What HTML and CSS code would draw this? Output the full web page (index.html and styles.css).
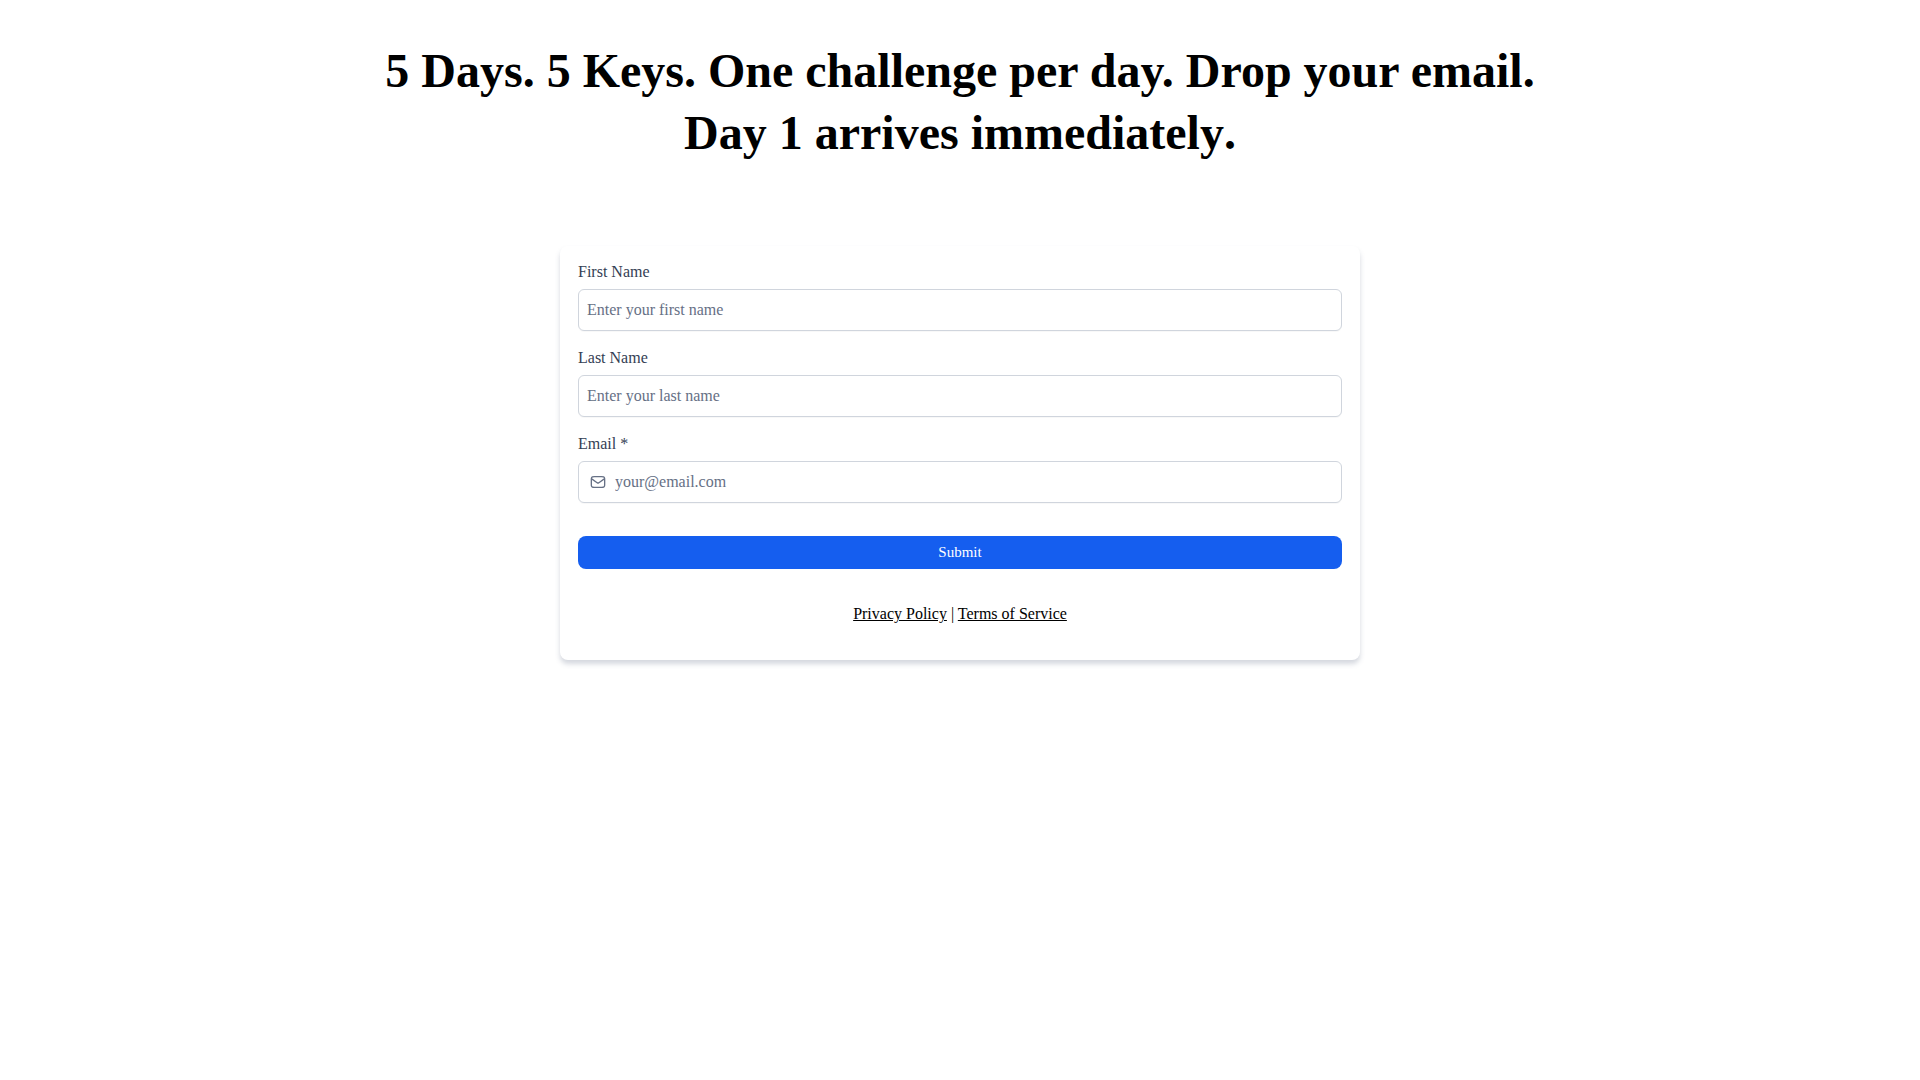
FILE: index.html
```html
<!DOCTYPE html>
<html lang="en">
<head>
    <meta charset="UTF-8">
    <meta name="viewport" content="width=device-width, initial-scale=1.0">
    <title>5 Days. 5 Keys.</title>
    <link rel="stylesheet" href="styles.css">
</head>
<body>
    <main class="page">
        <h1 class="headline">5 Days. 5 Keys. One challenge per day. Drop your email. <span class="lead">Day 1 arrives immediately</span>.</h1>

        <form class="form-card">
            <div class="field">
                <label for="firstName">First Name</label>
                <input type="text" id="firstName" name="first_name" placeholder="Enter your first name">
            </div>
            <div class="field">
                <label for="lastName">Last Name</label>
                <input type="text" id="lastName" name="last_name" placeholder="Enter your last name">
            </div>
            <div class="field">
                <label for="email">Email *</label>
                <div class="input-icon">
                    <svg width="16" height="16" viewBox="0 0 24 24" fill="none" stroke="currentColor" stroke-width="2" stroke-linecap="round" stroke-linejoin="round" aria-hidden="true">
                        <path d="M2 7l8.165 5.715c.661.463.992.695 1.351.784a2 2 0 0 0 .968 0c.36-.09.69-.32 1.351-.784L22 7M6.8 20h10.4c1.68 0 2.52 0 3.162-.327a3 3 0 0 0 1.311-1.311C22 17.72 22 16.88 22 15.2V8.8c0-1.68 0-2.52-.327-3.162a3 3 0 0 0-1.311-1.311C19.72 4 18.88 4 17.2 4H6.8c-1.68 0-2.52 0-3.162.327a3 3 0 0 0-1.311 1.311C2 6.28 2 7.12 2 8.8v6.4c0 1.68 0 2.52.327 3.162a3 3 0 0 0 1.311 1.311C4.28 20 5.12 20 6.8 20z"/>
                    </svg>
                    <input type="email" id="email" name="email" placeholder="your@email.com" required>
                </div>
            </div>
            <button type="submit" class="submit-btn">Submit</button>
            <p class="legal"><a href="#">Privacy Policy</a> | <a href="#">Terms of Service</a></p>
        </form>
    </main>
</body>
</html>
```
FILE: styles.css
```css
* {
    box-sizing: border-box;
}
body {
    margin: 0;
    background-color: #fff;
    color: #000;
    font-family: "Liberation Serif", "Times New Roman", serif;
    font-size: 16px;
    line-height: 24px;
}
.page {
    max-width: 1170px;
    margin: 0 auto;
    padding: 40px 5px;
}
.headline {
    margin: 0 0 82px;
    font-size: 48px;
    line-height: 62px;
    font-weight: 600;
    text-align: center;
}
.headline .lead {
    font-weight: 700;
}
.form-card {
    max-width: 800px;
    margin: 0 auto;
    padding: 14px 18px 34px;
    background-color: #fff;
    border-radius: 8px;
    box-shadow: 0 4px 5px 0 rgba(87, 100, 126, 0.25);
}
.field {
    margin-bottom: 15px;
}
.field label {
    display: block;
    margin-bottom: 5px;
    color: #344054;
}
.field input {
    display: block;
    width: 100%;
    height: 42px;
    padding: 0 8px;
    border: 1px solid #d0d5dd;
    border-radius: 6px;
    background-color: #fff;
    box-shadow: 0 1px 1px rgba(16, 24, 40, 0.03);
    color: #344054;
    font: inherit;
}
.field input::placeholder {
    color: #667085;
    opacity: 1;
}
.input-icon {
    position: relative;
}
.input-icon svg {
    position: absolute;
    top: 13px;
    left: 12px;
    color: #667085;
}
.input-icon input {
    padding-left: 36px;
}
.submit-btn {
    display: block;
    width: 100%;
    height: 33px;
    margin-top: 33px;
    border: none;
    border-radius: 8px;
    background-color: #155eef;
    color: #fff;
    font-family: inherit;
    font-size: 15px;
    cursor: pointer;
}
.legal {
    margin: 33px 0 0;
    text-align: center;
}
.legal a {
    color: inherit;
    text-decoration: underline;
}
```
